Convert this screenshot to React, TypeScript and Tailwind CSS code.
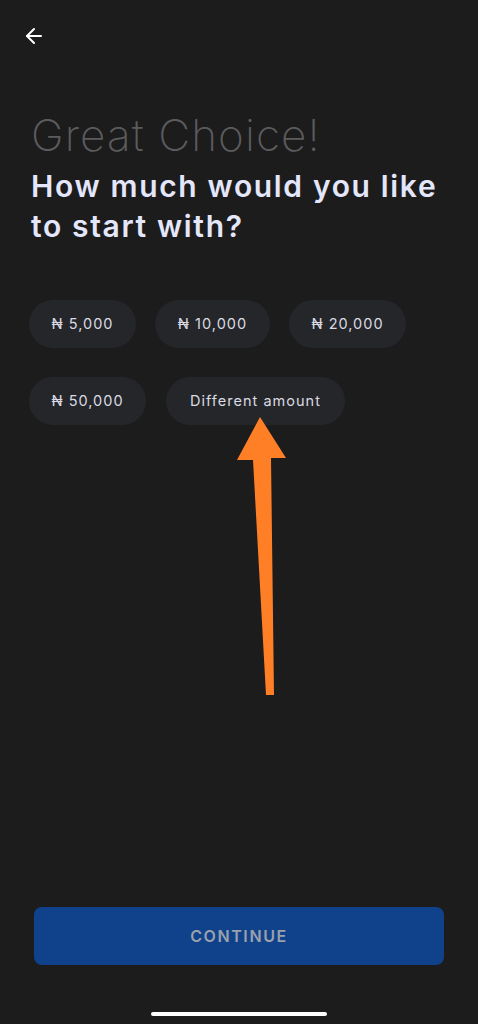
import { ArrowLeft } from 'lucide-react'

const amounts = ['₦ 5,000', '₦ 10,000', '₦ 20,000']

function Chip({ label, className = '' }: { label: string; className?: string }) {
  return (
    <button
      className={`flex h-12 items-center justify-center rounded-full bg-[#25262a] text-[14.5px] tracking-[0.07em] text-[#d9dae2] ${className}`}
    >
      {label}
    </button>
  )
}

export default function App() {
  return (
    <div
      className="relative flex h-[1024px] w-[478px] flex-col bg-[#1c1c1c]"
      style={{ fontFamily: 'Inter, "Noto Sans", sans-serif' }}
    >
      <div className="px-[22px] pt-[24px]">
        <ArrowLeft className="size-[24px] text-white" strokeWidth={2} />
      </div>

      <div className="px-[31px] pt-[60px]">
        <h1 className="text-[44px] font-extralight leading-[54px] tracking-[0.025em] text-[#5b5b5e]">
          Great Choice!
        </h1>
        <h2 className="mt-[4px] text-[30px] font-semibold leading-[40px] tracking-[0.055em] text-[#e4e6fb]">
          How much would you like
          <br />
          to start with?
        </h2>
      </div>

      <div className="mt-[54px] flex flex-col gap-[29px] px-[29px]">
        <div className="flex gap-[19px]">
          <Chip label={amounts[0]} className="w-[107px]" />
          <Chip label={amounts[1]} className="w-[115px]" />
          <Chip label={amounts[2]} className="w-[117px]" />
        </div>
        <div className="flex gap-[20px]">
          <Chip label="₦ 50,000" className="w-[117px]" />
          <Chip label="Different amount" className="w-[179px]" />
        </div>
      </div>

      <div className="mt-auto px-[34px] pb-[59px]">
        <button className="flex h-[58px] w-full items-center justify-center rounded-[8px] bg-[#10428c] text-[16px] font-semibold tracking-[0.1em] text-[#9aa1ad]">
          CONTINUE
        </button>
      </div>

      <div className="absolute bottom-[8px] left-[151px] h-[4px] w-[176px] rounded-full bg-white" />

      <svg className="absolute left-0 top-0" width="478" height="1024" viewBox="0 0 478 1024">
        <polygon
          points="260,417 286,458 271,458 274,695 266,695 253,460 237,460"
          fill="#ff7f27"
        />
      </svg>
    </div>
  )
}
